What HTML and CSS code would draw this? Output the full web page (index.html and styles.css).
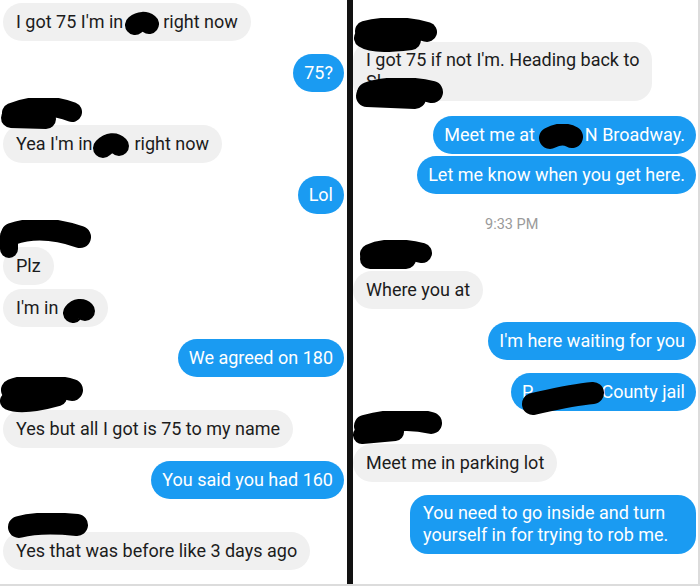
FILE: index.html
```html
<!DOCTYPE html>
<html lang="en">
<head>
  <meta charset="UTF-8" />
  <meta name="viewport" content="width=device-width, initial-scale=1.0"/>
  <title>Chat screenshots</title>
  <link rel="stylesheet" href="styles.css">
</head>
<body>
  <div class="shot">
    <section class="panel left">
      <div class="msg">I got 75 I'm in<svg class="ink-inline ml2 mr4" width="34" height="26" viewBox="0 0 34 26"><path class="ink" d="M10 14 C15 10 20 10 24 13" stroke-width="20"/></svg>right now</div>
      <div class="msg out gap">75?</div>

      <div class="name gap">
        <svg class="ink-name" style="left:-3px;top:-7px" width="88" height="34" viewBox="0 0 88 34"><path class="ink" d="M12 15 C28 8 52 6 72 14" stroke-width="20"/><path class="ink" d="M11 20 L46 21" stroke-width="20"/></svg>
      </div>
      <div class="msg">Yea I'm in<svg class="ink-inline mr4" width="38" height="26" viewBox="0 0 38 26"><path class="ink" d="M11 15 C17 9 23 9 27 13" stroke-width="20"/></svg>right now</div>
      <div class="msg out gap">Lol</div>

      <div class="name gap">
        <svg class="ink-name" style="left:-3px;top:-7px" width="92" height="40" viewBox="0 0 92 40"><path class="ink" d="M12 14 C35 6 60 10 80 17" stroke-width="22"/><path class="ink" d="M9 16 L9 29" stroke-width="18"/></svg>
      </div>
      <div class="msg">Plz</div>
      <div class="msg near">I'm in <svg class="ink-inline" width="32" height="26" viewBox="0 0 32 26"><path class="ink" d="M10 16 C14 11 19 11 22 14" stroke-width="20"/></svg></div>
      <div class="msg out gap-s">We agreed on 180</div>

      <div class="name gap">
        <svg class="ink-name" style="left:-3px;top:-13px" width="86" height="40" viewBox="0 0 86 40"><path class="ink" d="M12 13 C30 6 55 8 72 13" stroke-width="22"/><path class="ink" d="M9 24 C20 29 40 25 58 20" stroke-width="18"/></svg>
      </div>
      <div class="msg">Yes but all I got is 75 to my name</div>
      <div class="msg out gap">You said you had 160</div>

      <div class="name gap">
        <svg class="ink-name" style="left:4px;top:1px" width="82" height="26" viewBox="0 0 82 26"><path class="ink" d="M12 14 C30 9 50 10 70 12" stroke-width="22"/></svg>
      </div>
      <div class="msg">Yes that was before like 3 days ago</div>
    </section>

    <div class="divider"></div>

    <section class="panel right">
      <div class="name">
        <svg class="ink-name" style="left:0;top:-4px" width="88" height="36" viewBox="0 0 88 36"><path class="ink" d="M12 13 C30 8 55 8 74 14" stroke-width="20"/><path class="ink" d="M11 20 C20 26 40 24 58 22" stroke-width="20"/></svg>
      </div>
      <div class="msg two">I got 75 if not I'm. Heading back to<br>Sl
        <svg class="ink-cover" style="left:2px;top:36px" width="90" height="32" viewBox="0 0 90 32"><path class="ink" d="M13 15 C30 9 58 9 77 14" stroke-width="22"/><path class="ink" d="M12 18 L60 20" stroke-width="22"/></svg>
      </div>
      <div class="msg out gap-m">Meet me at<svg class="ink-inline ml4 mr2" width="44" height="26" viewBox="0 0 44 26"><path class="ink" d="M11 14 C20 9 28 10 33 13" stroke-width="22"/></svg>N Broadway.</div>
      <div class="msg out near-s">Let me know when you get here.</div>

      <div class="time">9:33 PM</div>

      <div class="name gap-t">
        <svg class="ink-name" style="left:5px;top:-11px" width="76" height="32" viewBox="0 0 76 32"><path class="ink" d="M12 14 C25 8 45 8 64 13" stroke-width="20"/><path class="ink" d="M12 19 L48 19" stroke-width="20"/></svg>
      </div>
      <div class="msg">Where you at</div>
      <div class="msg out gap">I'm here waiting for you</div>
      <div class="msg out gap">P<span class="blank"></span>County jail
        <svg class="ink-cover" style="left:10px;top:8px" width="84" height="36" viewBox="0 0 84 36"><path class="ink" d="M12 23 C30 19 50 14 72 12" stroke-width="22"/></svg>
      </div>

      <div class="name gap">
        <svg class="ink-name" style="left:0;top:-13px" width="90" height="36" viewBox="0 0 90 36"><path class="ink" d="M12 15 C35 9 60 7 78 12" stroke-width="22"/><path class="ink" d="M9 24 L42 21" stroke-width="18"/></svg>
      </div>
      <div class="msg">Meet me in parking lot</div>
      <div class="msg out two wide gap">You need to go inside and turn<br>yourself in for trying to rob me.</div>
    </section>
  </div>
</body>
</html>
```

FILE: styles.css
```css
* {
  box-sizing: border-box;
}

body {
  margin: 0;
  background: #fff;
  font-family: Roboto, "Noto Sans", Arial, sans-serif;
}

.shot {
  display: flex;
  width: 700px;
  height: 586px;
  border-right: 2px solid #dcdcdc;
  border-bottom: 2px solid #dcdcdc;
  overflow: hidden;
}

.panel {
  display: flex;
  flex-direction: column;
  align-items: flex-start;
}

.left {
  width: 347px;
  padding: 3px 3px 0;
}

.divider {
  width: 6px;
  background: #111;
}

.right {
  flex: 1;
  padding: 22px 2px 0 0;
}

.msg {
  position: relative;
  font-size: 18px;
  line-height: 22px;
  padding: 8px 13px;
  border-radius: 19px;
  background: #f0f0f0;
  color: #1c1c1c;
  white-space: nowrap;
}

.msg.out {
  align-self: flex-end;
  background: #1a9bf2;
  color: #fff;
  padding: 8px 11px;
}

.msg.two {
  padding-top: 7px;
  padding-bottom: 8px;
  border-radius: 18px;
}

.msg.wide {
  width: 286px;
  padding-left: 13px;
}

.gap { margin-top: 13px; }
.gap-s { margin-top: 12px; }
.gap-m { margin-top: 15px; }
.gap-t { margin-top: 16px; }
.near { margin-top: 4px; }
.near-s { margin-top: 2px; }

.name {
  position: relative;
  width: 80px;
  height: 20px;
}

.time {
  margin: 21px 0 0 132px;
  font-size: 14.5px;
  line-height: 20px;
  color: #9a9a9a;
}

.ink {
  fill: none;
  stroke: #000;
  stroke-linecap: round;
  stroke-linejoin: round;
}

.ink-inline {
  display: inline-block;
  vertical-align: -4px;
  margin: -5px 0;
}

.ml2 { margin-left: 2px; }
.ml4 { margin-left: 4px; }
.mr2 { margin-right: 2px; }
.mr4 { margin-right: 4px; }

.ink-name,
.ink-cover {
  position: absolute;
  z-index: 2;
}

.blank {
  display: inline-block;
  width: 68px;
}
```
